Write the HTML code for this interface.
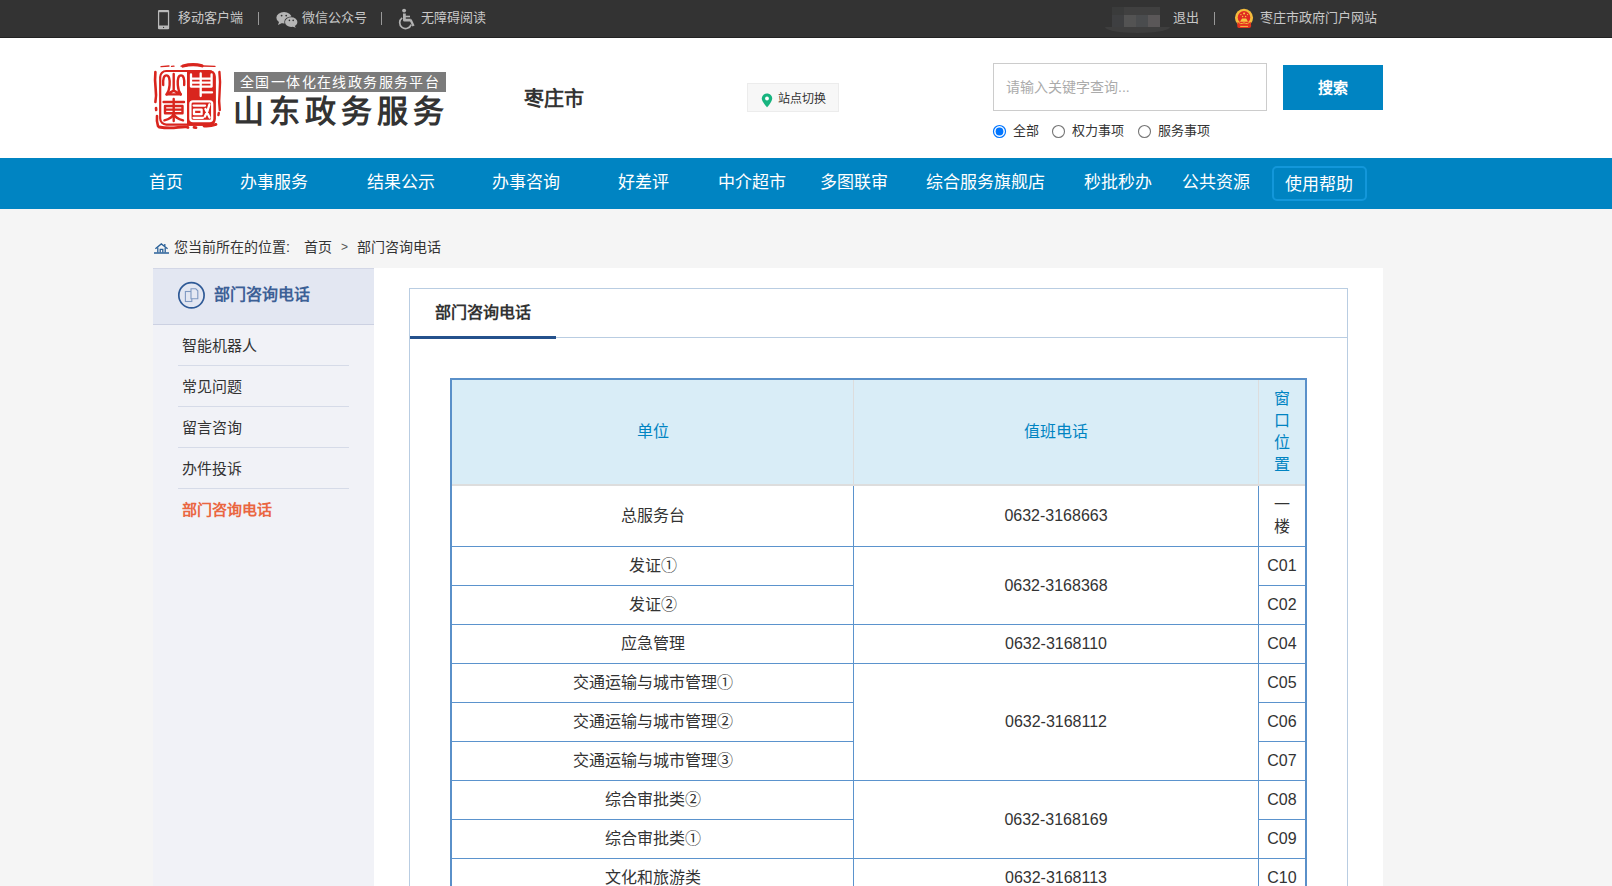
<!DOCTYPE html>
<html lang="zh-CN">
<head>
<meta charset="utf-8">
<title>部门咨询电话</title>
<style>
*{box-sizing:border-box;margin:0;padding:0}
html,body{width:1612px;height:886px;overflow:hidden}
body{position:relative;background:#f5f5f5;font-family:"Liberation Sans",sans-serif;color:#333;font-size:14px}
.abs{position:absolute;white-space:nowrap}
/* top bar */
#topbar{position:absolute;left:0;top:0;width:1612px;height:38px;background:#333;border-bottom:1px solid #222}
#topbar .t{position:absolute;top:0;height:35px;line-height:35px;font-size:13px;color:#c8c8c8;white-space:nowrap}
#topbar .sep{position:absolute;top:12px;width:1px;height:13px;background:#999}
/* header */
#header{position:absolute;left:0;top:38px;width:1612px;height:120px;background:#fff}
/* nav */
#nav{position:absolute;left:0;top:158px;width:1612px;height:51px;background:#0084c2}
#nav .n{position:absolute;top:1px;height:48px;line-height:48px;font-size:17px;color:#fff;white-space:nowrap}
/* breadcrumb */
#crumb{position:absolute;left:0;top:209px;width:1612px;height:59px}
#crumb .c{position:absolute;top:28px;height:20px;line-height:20px;font-size:14px;color:#333;white-space:nowrap}
/* container */
#wrap{position:absolute;left:153px;top:268px;width:1230px;height:618px;background:#fff}
#side{position:absolute;left:0;top:0;width:221px;height:618px;background:#f1f2f7}
#side .hd{position:absolute;left:0;top:0;width:221px;height:57px;background:#e3e7f2;border-top:1px solid #d3d7e6;border-bottom:1px solid #ccd1e2}
#side .hd .ttl{position:absolute;left:61px;top:15px;line-height:22px;font-size:16px;font-weight:bold;color:#3d6096;white-space:nowrap}
#side .it{position:absolute;left:25px;width:171px;height:41px;line-height:40px;padding-top:1px;padding-left:4px;font-size:15px;color:#333;border-bottom:1px solid #d6dbe8;white-space:nowrap}
#side .it.on{color:#ea6641;font-weight:bold;border-bottom:none}
#panel{position:absolute;left:256px;top:20px;width:939px;height:620px;border:1px solid #b9cde2;background:#fff}
#panel .ph{position:absolute;left:0;top:0;width:937px;height:49px;border-bottom:1px solid #b9cde2}
#panel .ph .tab{position:absolute;left:0;top:0;width:146px;height:50px;border-bottom:3px solid #24518c;font-size:16px;font-weight:bold;color:#333;line-height:48px;text-align:center;white-space:nowrap}
/* table */
#tb{position:absolute;left:40px;top:89px;width:857px;border-collapse:separate;border-spacing:0;table-layout:fixed;font-size:16px;line-height:22px;color:#333;border:2px solid #5a90c9;border-bottom:none}
#tb td,#tb th{box-sizing:content-box;padding:8px 0;text-align:center;vertical-align:middle;font-weight:normal;border-right:1px solid #5b93cd;border-bottom:1px solid #5b93cd}
#tb th{background:#d9edf7;color:#0084c2;border-right:1px solid #ddd;border-bottom:2px solid #ddd}
#tb .l{border-right:none}
</style>
</head>
<body>
<div id="topbar">
  <svg class="abs" style="left:157px;top:9px" width="13" height="21" viewBox="0 0 13 21"><rect x="0.970" y="0.900" width="11.200" height="19.350" rx="1.100" fill="#bababa"/><rect x="2.200" y="3.200" width="8.700" height="13.300" fill="#333"/><circle cx="6.550" cy="18.450" r="0.650" fill="#333"/><path d="M2.400 18.450 L5.200 18.450 M7.900 18.450 L10.700 18.450" stroke="#a8a8a8" stroke-width="0.500"/></svg>
  <span class="t" style="left:178px">移动客户端</span>
  <span class="sep" style="left:258px"></span>
  <svg class="abs" style="left:276px;top:11px" width="22" height="17" viewBox="0 0 22 17"><ellipse cx="8" cy="6.700" rx="7.600" ry="5.700" fill="#b5b5b5"/><path d="M3.2 10.5 L2 14 L6.5 11.8 Z" fill="#b5b5b5"/><ellipse cx="15.200" cy="11" rx="6.900" ry="5.600" fill="#333"/><ellipse cx="15.200" cy="11.100" rx="6.200" ry="4.900" fill="#b5b5b5"/><path d="M18.5 14.6 L19.8 16.8 L16.2 15.5 Z" fill="#b5b5b5"/><circle cx="5.6" cy="4.6" r="0.9" fill="#333"/><circle cx="10.2" cy="4.6" r="0.9" fill="#333"/><circle cx="13.4" cy="9.4" r="0.8" fill="#333"/><circle cx="17.2" cy="9.4" r="0.8" fill="#333"/></svg>
  <span class="t" style="left:302px">微信公众号</span>
  <span class="sep" style="left:381px"></span>
  <svg class="abs" style="left:396px;top:8px" width="20" height="23" viewBox="0 0 20 23"><circle cx="8.100" cy="2.600" r="1.950" fill="#b2b2b2"/><g fill="none" stroke="#b2b2b2"><path d="M8.400 5.400 L8.400 12.200 L14.800 12.200" stroke-width="2.800" stroke-linejoin="round"/><path d="M14.600 11.800 L17.500 18.100" stroke-width="2.300"/><path d="M9 8.500 L14 8.500" stroke-width="1.600"/><path d="M6.180 9.820 A5.900 5.900 0 1 0 15.150 16.600" stroke-width="1.700"/></g></svg>
  <span class="t" style="left:421px">无障碍阅读</span>
  <div class="abs" style="left:1105px;top:27px;width:65px;height:6px;background:#3e3e3e;border-radius:0 0 32px 32px/0 0 6px 6px"></div>
  <div class="abs" style="left:1112px;top:7px;width:48px;height:20px;background:#404040"></div>
  <div class="abs" style="left:1112px;top:7px;width:12px;height:8px;background:#3a3b3b"></div>
  <div class="abs" style="left:1112px;top:15px;width:12px;height:12px;background:#3e3f41"></div>
  <div class="abs" style="left:1124px;top:15px;width:12px;height:12px;background:#535353"></div>
  <div class="abs" style="left:1136px;top:15px;width:12px;height:12px;background:#4a4c4e"></div>
  <div class="abs" style="left:1148px;top:15px;width:12px;height:12px;background:#5a5758"></div>
  <span class="t" style="left:1173px">退出</span>
  <span class="sep" style="left:1214px"></span>
  <svg class="abs" style="left:1234px;top:7px" width="20" height="22" viewBox="0 0 20 22"><circle cx="10" cy="10.800" r="9.050" fill="#f3bb3c"/><circle cx="10" cy="10.400" r="6.300" fill="#e02a22"/><g fill="#f6c640"><circle cx="10.100" cy="6.500" r="1.050"/><circle cx="6.900" cy="7.600" r="0.700"/><circle cx="13.500" cy="7.600" r="0.700"/><circle cx="8.600" cy="9.500" r="0.700"/><circle cx="11.600" cy="9.500" r="0.700"/><path d="M7.400 12.400 L8 11.600 L12.200 11.600 L12.800 12.400 L14 14.700 L6 14.700 Z"/></g><path d="M3.600 15 L16.600 15 L17.200 19 Q17 21 15 21 L5 21 Q3.200 21 3.200 19 Z" fill="#e5331f"/><path d="M4.200 15 Q6.500 17.400 8.600 16.400 Q10 15.200 11.400 16.400 Q13.500 17.400 15.900 15" fill="none" stroke="#f3bb3c" stroke-width="1"/><rect x="6.200" y="18.900" width="7.800" height="1.100" fill="#f3b03c"/></svg>
  <span class="t" style="left:1260px">枣庄市政府门户网站</span>
</div>
<div id="header">
  <!-- seal: coords relative to header (top 38) -->
  <svg class="abs" style="left:148px;top:20px" width="80" height="76" viewBox="0 0 80 76">
    <g fill="none" stroke="#d9251e" stroke-linecap="round">
      <path d="M13 8.600 L21 8 M23.500 8.400 L26 8.200 M33 8.200 L39 7.800 M55 8 L67 8.400" stroke-width="1.300"/>
      <path d="M35 8 Q45 5.500 54 7.800" stroke-width="3.200"/>
      <path d="M7.400 14 Q6.600 22 7.600 30 T7.400 44 M8 50 L8.200 52 M9 58 Q8.400 63 10 68" stroke-width="2.600"/>
      <path d="M71.400 14 Q72.600 24 71.600 34 T71.800 52 M70.800 55 L70.400 57" stroke-width="2.400"/>
      <path d="M11 69 Q20 70.600 30 69.400 T40 69.600 M46 69.400 L48 69.600 M56 68 Q62 68.600 68 66.400" stroke-width="2.800"/>
    </g>
    <rect x="12.200" y="13" width="54.400" height="53.600" rx="6" fill="#fff" stroke="#d9251e" stroke-width="2.200"/>
    <path d="M39 12 L60.600 12 Q67.700 12 67.700 19 L67.700 60.600 Q67.700 67.700 60.600 67.700 L39 67.700 Z" fill="#d9251e"/>
    <g fill="none" stroke="#d9251e" stroke-width="2.400" stroke-linecap="round" stroke-linejoin="round">
      <path d="M15.200 27 Q14.600 17.400 18.400 17.400 Q22.200 17.400 21.600 27 Q21.200 33 18.600 36.400"/>
      <path d="M36.200 27 Q36.800 17.400 33 17.400 Q29.200 17.400 29.800 27 Q30.200 33 32.800 36.400"/>
      <path d="M25.700 16 L25.700 32 M18.600 36.400 L25.700 32.600 L32.800 36.400 Z"/>
      <path d="M25.700 41 L25.700 63 M15.600 44 L36 44 M17 48 L34.500 48 L34.500 55.200 L17 55.200 Z M17 51.600 L34.500 51.600"/>
      <path d="M25.700 56 Q24 60.400 16.400 62.400 M25.700 56 Q27.400 60.400 35 62.400"/>
    </g>
    <g fill="none" stroke="#fff" stroke-width="2.300" stroke-linecap="round" stroke-linejoin="round">
      <path d="M52.700 15.400 L52.700 38 M43 16.400 L43 28.600 L63.600 28.600 L63.600 16.400 M43 20.600 L63.600 20.600 M43 24.600 L63.600 24.600 M52.700 34.400 L64 34.400"/>
      <rect x="42.400" y="43.400" width="21.800" height="19.600" rx="2.600"/>
      <path d="M45.600 47.600 L57 47.600 M46 51.600 L53.600 51.600 L53.600 56.200 L46 56.200 Z M45.600 59.800 L55 59.800 M61.400 46.400 Q59.600 54 56.800 58.600 M57.400 51 L61.600 59.600"/>
    </g>
  </svg>
  <div class="abs" style="left:234px;top:34px;width:212px;height:20px;background:#7b7b7b;color:#fff;font-size:14px;line-height:20px;letter-spacing:1.4px;padding-left:6px">全国一体化在线政务服务平台</div>
  <div class="abs" style="left:233px;top:54px;height:40px;line-height:40px;font-size:31px;font-weight:bold;color:#333;letter-spacing:5px">山东政务服务</div>
  <div class="abs" style="left:524px;top:46px;height:30px;line-height:30px;font-size:20px;font-weight:bold;color:#333">枣庄市</div>
  <div class="abs" style="left:747px;top:45px;width:92px;height:29px;background:#f7f7f7;border:1px solid #ececec"></div>
  <svg class="abs" style="left:761px;top:55px" width="12" height="15" viewBox="0 0 12 15"><path d="M6 0.6C3 0.6 0.8 2.8 0.8 5.6 0.8 9 6 14.4 6 14.4S11.200 9 11.200 5.600C11.200 2.800 9 0.600 6 0.600Z" fill="#17b47f"/><circle cx="6" cy="5.500" r="1.900" fill="#fff"/></svg>
  <div class="abs" style="left:778px;top:47px;height:29px;line-height:29px;font-size:12px;color:#333">站点切换</div>
  <div class="abs" style="left:993px;top:25px;width:274px;height:48px;border:1px solid #ccc;background:#fff"></div>
  <div class="abs" style="left:1006px;top:25px;height:48px;line-height:48px;font-size:14px;color:#ababab">请输入关键字查询...</div>
  <div class="abs" style="left:1283px;top:27px;width:100px;height:45px;line-height:45px;background:#0084c2;color:#fff;font-size:15px;font-weight:bold;text-align:center">搜索</div>
  <!-- radios -->
  <svg class="abs" style="left:992px;top:86px" width="15" height="15" viewBox="0 0 15 15"><circle cx="7.500" cy="7.500" r="6" fill="#fff" stroke="#0075ff" stroke-width="1.200"/><circle cx="7.500" cy="7.500" r="3.900" fill="#0075ff"/></svg>
  <div class="abs" style="left:1013px;top:83px;height:20px;line-height:20px;font-size:13px;color:#333">全部</div>
  <svg class="abs" style="left:1051px;top:86px" width="15" height="15" viewBox="0 0 15 15"><circle cx="7.500" cy="7.500" r="6" fill="#fff" stroke="#767676" stroke-width="1.100"/></svg>
  <div class="abs" style="left:1072px;top:83px;height:20px;line-height:20px;font-size:13px;color:#333">权力事项</div>
  <svg class="abs" style="left:1137px;top:86px" width="15" height="15" viewBox="0 0 15 15"><circle cx="7.500" cy="7.500" r="6" fill="#fff" stroke="#767676" stroke-width="1.100"/></svg>
  <div class="abs" style="left:1158px;top:83px;height:20px;line-height:20px;font-size:13px;color:#333">服务事项</div>
</div>
<div id="nav">
  <span class="n" style="left:149px">首页</span>
  <span class="n" style="left:240px">办事服务</span>
  <span class="n" style="left:367px">结果公示</span>
  <span class="n" style="left:492px">办事咨询</span>
  <span class="n" style="left:618px">好差评</span>
  <span class="n" style="left:718px">中介超市</span>
  <span class="n" style="left:820px">多图联审</span>
  <span class="n" style="left:926px">综合服务旗舰店</span>
  <span class="n" style="left:1084px">秒批秒办</span>
  <span class="n" style="left:1182px">公共资源</span>
  <div class="abs" style="left:1272px;top:8px;width:95px;height:35px;border:2px solid #1397da;border-radius:5px"></div>
  <span class="n" style="left:1285px;top:3px">使用帮助</span>
</div>
<div id="crumb">
  <svg class="abs" style="left:154px;top:34px" width="15" height="11" viewBox="0 0 15 11"><g fill="none" stroke="#2a6098" stroke-width="1.300"><path d="M1.400 5.800 L7.300 0.900 L13.600 5.800"/><path d="M3.800 4.600 L3.800 9.600 M11.200 4.600 L11.200 9.600 M6.200 9.600 L6.200 6.400 L8.800 6.400 L8.800 9.600 M10.800 1 L10.800 3"/><path d="M0 10 L15 10" stroke-width="1.500"/></g></svg>
  <span class="c" style="left:174px">您当前所在的位置:</span>
  <span class="c" style="left:303.500px">首页</span>
  <span class="c" style="left:341px;font-size:12px;color:#555">&gt;</span>
  <span class="c" style="left:357px">部门咨询电话</span>
</div>
<div id="wrap">
  <div id="side">
    <div class="hd">
      <svg class="abs" style="left:24px;top:12px" width="29" height="29" viewBox="0 0 29 29"><circle cx="14.450" cy="14.300" r="12.650" fill="none" stroke="#2f5a96" stroke-width="1.700"/><rect x="8.400" y="10.500" width="6.400" height="10" fill="none" stroke="#7f99c2" stroke-width="1.100"/><path d="M14 7.800 L18.800 7.800 L20.800 9.800 L20.800 17.800 L14 17.800 Z" fill="#e4e8f3" stroke="#7f99c2" stroke-width="1.100"/></svg>
      <div class="ttl">部门咨询电话</div>
    </div>
    <div class="it" style="top:57px">智能机器人</div>
    <div class="it" style="top:98px">常见问题</div>
    <div class="it" style="top:139px">留言咨询</div>
    <div class="it" style="top:180px">办件投诉</div>
    <div class="it on" style="top:221px">部门咨询电话</div>
  </div>
  <div id="panel">
    <div class="ph"><div class="tab">部门咨询电话</div></div>
    <table id="tb">
      <colgroup><col style="width:402px"><col style="width:405px"><col style="width:46px"></colgroup>
      <tr><th>单位</th><th>值班电话</th><th class="l">窗<br>口<br>位<br>置</th></tr>
      <tr><td>总服务台</td><td>0632-3168663</td><td class="l">一<br>楼</td></tr>
      <tr><td>发证①</td><td rowspan="2">0632-3168368</td><td class="l">C01</td></tr>
      <tr><td>发证②</td><td class="l">C02</td></tr>
      <tr><td>应急管理</td><td>0632-3168110</td><td class="l">C04</td></tr>
      <tr><td>交通运输与城市管理①</td><td rowspan="3">0632-3168112</td><td class="l">C05</td></tr>
      <tr><td>交通运输与城市管理②</td><td class="l">C06</td></tr>
      <tr><td>交通运输与城市管理③</td><td class="l">C07</td></tr>
      <tr><td>综合审批类②</td><td rowspan="2">0632-3168169</td><td class="l">C08</td></tr>
      <tr><td>综合审批类①</td><td class="l">C09</td></tr>
      <tr><td>文化和旅游类</td><td>0632-3168113</td><td class="l">C10</td></tr>
      <tr><td>社会事务类</td><td>0632-3168114</td><td class="l">C11</td></tr>
    </table>
  </div>
</div>
</body>
</html>
